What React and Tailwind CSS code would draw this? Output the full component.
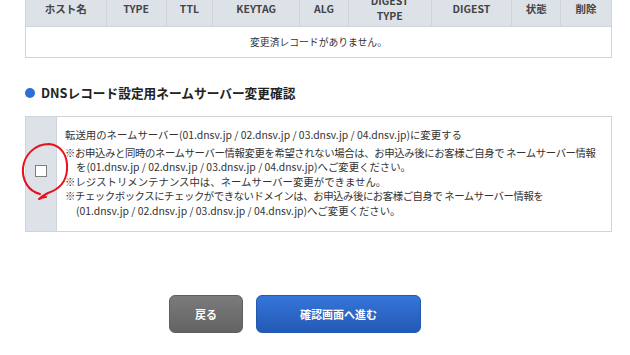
import React from "react"

const font = { fontFamily: '"Noto Sans CJK JP", "Noto Sans", sans-serif' }

const headers = [
  { label: "ホスト名", w: "w-[81px]" },
  { label: "TYPE", w: "w-[60px]" },
  { label: "TTL", w: "w-[47px]" },
  { label: "KEYTAG", w: "w-[87px]" },
  { label: "ALG", w: "w-[49px]" },
  { label: "DIGEST\nTYPE", w: "w-[83px]" },
  { label: "DIGEST", w: "w-[81px]" },
  { label: "状態", w: "w-[49px]" },
  { label: "削除", w: "w-[50px]" },
]

// hand-drawn marker around the checkbox
const RedCircle = () => (
  <svg
    className="absolute -left-[16px] -top-[17px] z-10 w-[70px] h-[110px] max-w-none pointer-events-none"
    viewBox="0 0 70 110"
  >
    <path
      d="M30 94 C18 91, 12 80, 13 68 C14 55, 25 44, 39 44 C51 45, 58 55, 57 70 C56 83, 47 90, 38 93 C34 95, 31 97, 29 99 C31 98, 33 97, 36 97"
      fill="none"
      stroke="#e8101a"
      strokeWidth="2"
      strokeLinecap="round"
      strokeLinejoin="round"
    />
  </svg>
)

export default function App() {
  return (
    <div className="w-[630px] h-[355px] overflow-hidden bg-white text-[#333]" style={font}>
      <div className="pl-[25px] -mt-[11px]">
        {/* table */}
        <div className="w-[587px] border border-[#cfd4da]">
          <div className="flex h-[37px] bg-[#dde2e9] border-b border-[#cfd4da]">
            {headers.map((h, i) => (
              <div
                key={i}
                className={`${h.w} flex items-center justify-center text-center whitespace-pre-line text-[10.5px] leading-[15px] font-bold text-[#444] ${
                  i < headers.length - 1 ? "border-r border-[#cfd4da]" : ""
                }`}
              >
                {h.label}
              </div>
            ))}
          </div>
          <div className="h-[30px] flex items-center justify-center text-[9.8px]">
            変更済レコードがありません。
          </div>
        </div>

        {/* heading */}
        <div className="mt-[25px] flex items-center h-[20px]">
          <span className="w-[10px] h-[10px] rounded-full bg-[#2b6fd6]" />
          <span className="ml-[6px] text-[12.7px] font-bold text-[#222]">
            DNSレコード設定用ネームサーバー変更確認
          </span>
        </div>

        {/* confirm box */}
        <div className="relative mt-[13px] w-[587px] h-[116px] flex border border-[#cfd4da]">
          <div className="w-[31px] shrink-0 bg-[#dde2e9] border-r border-[#cfd4da] flex items-center justify-center pb-[6px]">
            <span className="w-[12px] h-[12px] bg-white border border-[#7d7d7d]" />
          </div>
          <div className="pl-[8px] pt-[11px] text-[10.4px] leading-[14.5px] whitespace-nowrap">
            <p className="mb-[3px]">
              転送用のネームサーバー(01.dnsv.jp / 02.dnsv.jp / 03.dnsv.jp / 04.dnsv.jp)に変更する
            </p>
            <p className="tracking-[-0.4px]">※お申込みと同時のネームサーバー情報変更を希望されない場合は、お申込み後にお客様ご自身で ネームサーバー情報</p>
            <p className="pl-[11px]">を(01.dnsv.jp / 02.dnsv.jp / 03.dnsv.jp / 04.dnsv.jp)へご変更ください。</p>
            <p>※レジストリメンテナンス中は、ネームサーバー変更ができません。</p>
            <p className="tracking-[-0.45px]">※チェックボックスにチェックができないドメインは、お申込み後にお客様ご自身で ネームサーバー情報を</p>
            <p className="pl-[11px]">(01.dnsv.jp / 02.dnsv.jp / 03.dnsv.jp / 04.dnsv.jp)へご変更ください。</p>
          </div>
          <RedCircle />
        </div>

        {/* buttons */}
        <div className="mt-[63px] ml-[144px] flex gap-[13px]">
          <button className="w-[74px] h-[38px] rounded-[6px] bg-gradient-to-b from-[#7b7b7b] to-[#636363] border border-[#5e5e5e] text-white text-[11px] font-bold">
            戻る
          </button>
          <button className="w-[165px] h-[38px] rounded-[6px] bg-gradient-to-b from-[#3476d8] to-[#2459b6] border border-[#2457b0] text-white text-[11px] font-bold">
            確認画面へ進む
          </button>
        </div>
      </div>
    </div>
  )
}
